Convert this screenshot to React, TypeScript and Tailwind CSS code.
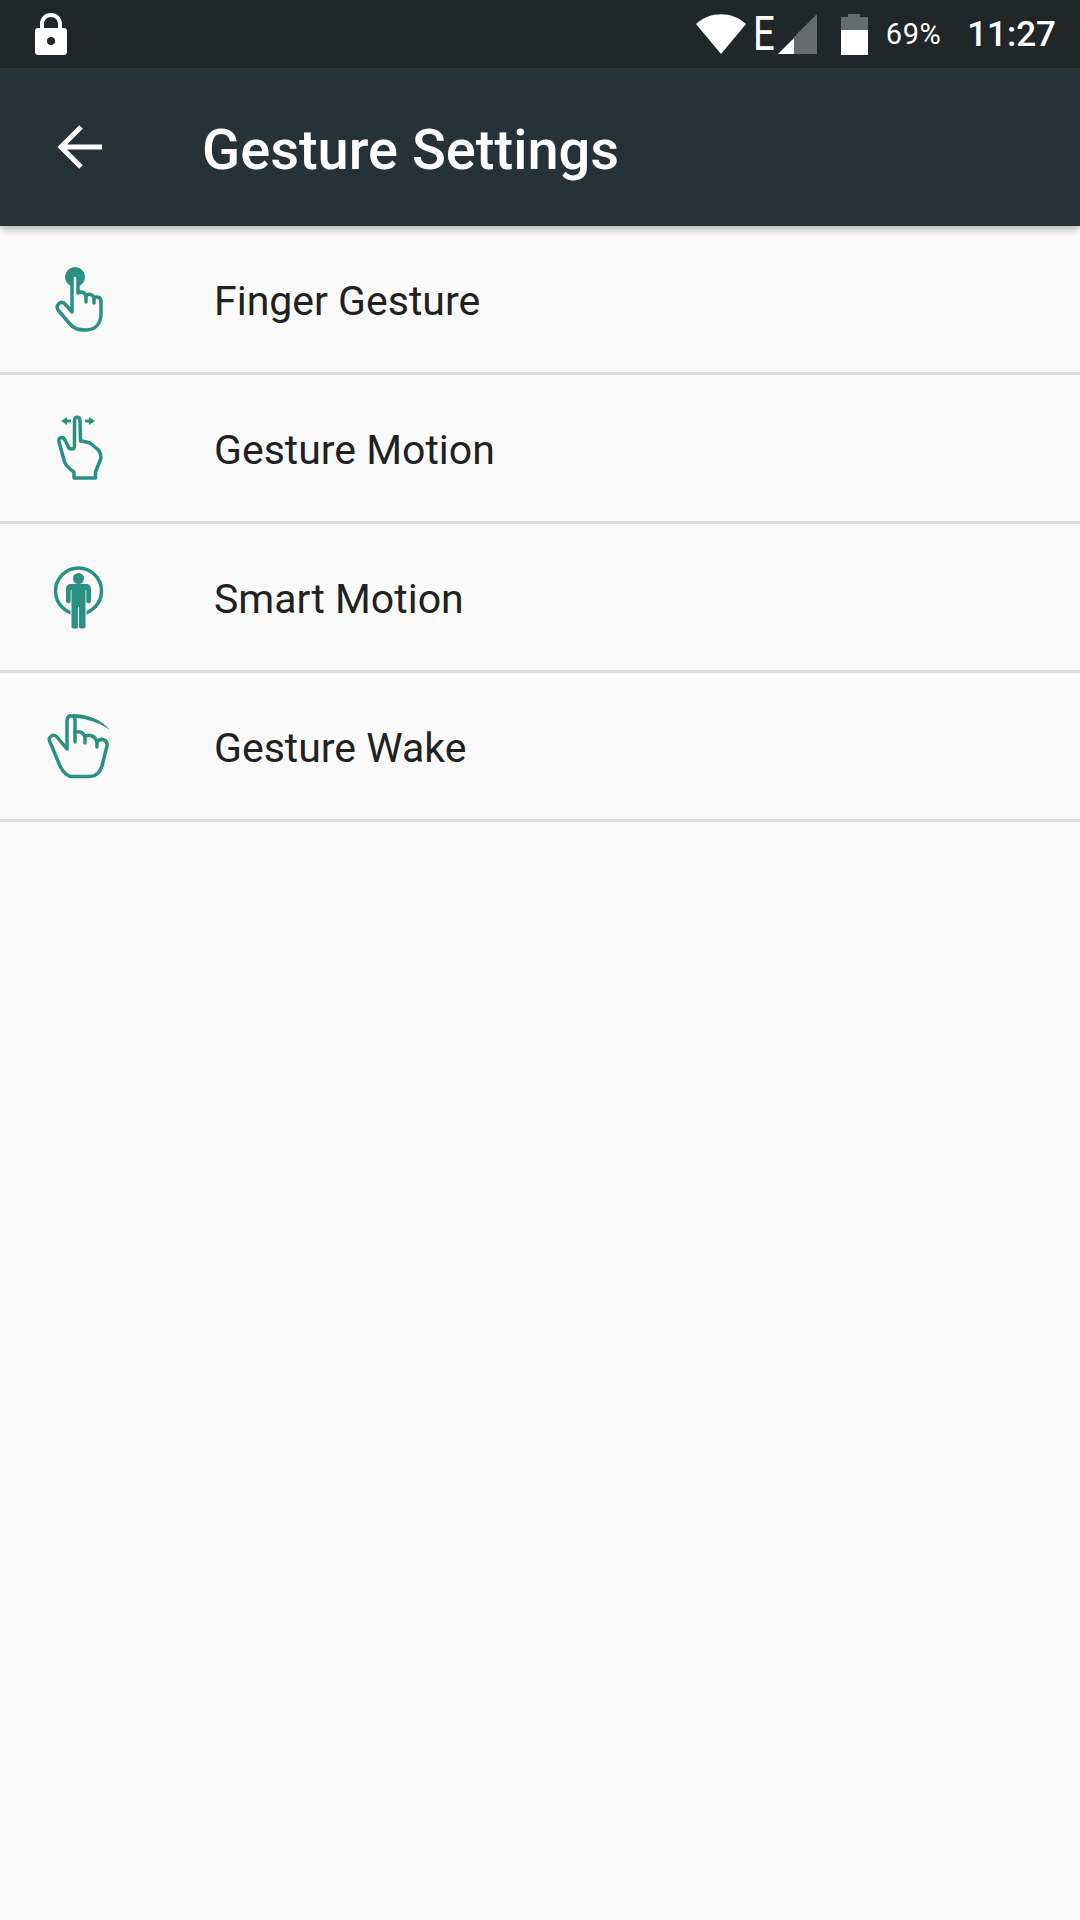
const font = { fontFamily: "Roboto, sans-serif" };

function LockIcon() {
  return (
    <svg width="32" height="42" viewBox="0 0 32 42" className="block">
      <path
        fillRule="evenodd"
        fill="#fff"
        d="M16 0C9.500 0 5 4.800 5 11v4H3c-1.700 0-3 1.300-3 3v21c0 1.700 1.300 3 3 3h26c1.700 0 3-1.300 3-3V18c0-1.700-1.300-3-3-3h-2v-4C27 4.800 22.500 0 16 0zM9 15v-4c0-4 3-7 7-7s7 3 7 7v4H9zM16 24a4 4 0 1 1 0 8 4 4 0 0 1 0-8z"
      />
    </svg>
  );
}

function WifiIcon() {
  return (
    <svg width="50" height="40" viewBox="0 0 50 40" className="block">
      <path fill="#fff" d="M0 10C14 -3 36 -3 50 10L25 40z" />
    </svg>
  );
}

function SignalIcon() {
  return (
    <svg width="39" height="40" viewBox="0 0 39 40" className="block">
      <path fill="#666b6d" d="M39 0V40H16V23z" />
      <path fill="#fff" d="M0 40L16 24V40z" />
    </svg>
  );
}

function BatteryIcon() {
  return (
    <svg width="27" height="41" viewBox="0 0 27 41" className="block">
      <path fill="#666b6d" d="M7 0H19V3H27V16H0V3H7z" />
      <rect y="16" width="27" height="25" fill="#fff" />
    </svg>
  );
}

function BackIcon() {
  return (
    <svg width="46" height="46" viewBox="0 0 46 46" className="mt-[2px] block">
      <path d="M45 22H5M24 2L4 22l20 20" fill="none" stroke="#fff" strokeWidth="5" />
    </svg>
  );
}

const teal = "#2a9082";

function FingerIcon() {
  return (
    <svg width="100" height="100" viewBox="0 -2 100 100" className="block">
      <circle cx="45" cy="26" r="10" fill={teal} />
      <g fill="none" stroke={teal} strokeWidth="3.500" strokeLinecap="round" strokeLinejoin="round">
        <path
          d="M42 26V61L35 53C31 49 25 54 28 59L39 72C44 78 48 79 56 79C66 79 71 72 71 62V50C71 46 66 45 64 47C63 43 58 42 56 45C55 41 50 40 48 42V26"
          fill="#fafafa"
        />
        <path d="M56 45V51M64 47V52" />
      </g>
      <path d="M44.800 26V38" stroke="#fafafa" strokeWidth="1.500" />
    </svg>
  );
}

function MotionIcon() {
  return (
    <svg width="100" height="100" viewBox="0 -2 100 100" className="block">
      <g fill={teal}>
        <path d="M31 21L37 17V19.500H41V22.500H37V25z" />
        <path d="M65 21L59 17V19.500H55V22.500H59V25z" />
      </g>
      <path
        d="M44 72V78H65.500V72L71 58C71 53 69 50 66 48L60 43L52 41H50.500L50 21C50 16 44.500 16 44.500 21V46C44.500 50 39 50 38 46L35 40C33 36 28 37 29 42L34 60C35 65 38 68 44 72z"
        fill="none"
        stroke={teal}
        strokeWidth="3.500"
        strokeLinejoin="round"
      />
    </svg>
  );
}

function PersonIcon() {
  return (
    <svg width="100" height="100" viewBox="0 -3 100 100" className="block">
      <circle cx="48.500" cy="41" r="23" fill="none" stroke={teal} strokeWidth="3.500" />
      <path
        d="M36 39C36 36 38 34 41 34H56C59 34 61 36 61 39V51C61 54 56.300 54 56.300 51V40H55.500V77C55.500 79 49 79 49 77V57H48V77C48 79 41.500 79 41.500 77V40H40.700V51C40.700 54 36 54 36 51z"
        fill={teal}
        stroke="#fafafa"
        strokeWidth="2"
        paintOrder="stroke"
      />
      <circle cx="48.500" cy="28.500" r="5.500" fill={teal} />
    </svg>
  );
}

function WakeIcon() {
  return (
    <svg width="100" height="100" viewBox="0 -4 100 100" className="block">
      <path d="M42 14C58 14 72 20 80 30C70 23 58 19 46 18z" fill={teal} />
      <g fill="none" stroke={teal} strokeWidth="3.500" strokeLinecap="round" strokeLinejoin="round">
        <path d="M45 33V20C45 15 38 14 37 20V49L27 37C24 33 17 37 20 42L30 66C33 72 37 76.500 42 76.500H60C66 76.500 70 72 72 66L77 46C78 40 71 37 67 42C65 35 58 34 55 37C53 31 47 31 45 33z" />
        <path d="M45 33V42M55 37V43M67 42V47" />
      </g>
    </svg>
  );
}

const rows = [
  { label: "Finger Gesture", icon: <FingerIcon /> },
  { label: "Gesture Motion", icon: <MotionIcon /> },
  { label: "Smart Motion", icon: <PersonIcon /> },
  { label: "Gesture Wake", icon: <WakeIcon /> },
];

export default function App() {
  return (
    <div style={font} className="flex h-[1920px] w-[1080px] flex-col overflow-hidden bg-[#fafafa]">
      {/* Status bar */}
      <div className="flex h-[68px] items-center bg-[#212729] pl-[35px] pr-[24px] text-white">
        <LockIcon />
        <div className="ml-auto flex items-center">
          <WifiIcon />
          <span className="ml-[7px] w-[22px] origin-left scale-x-[0.8] text-[48px] leading-none font-normal">E</span>
          <span className="ml-[3px]">
            <SignalIcon />
          </span>
          <span className="ml-[24px]">
            <BatteryIcon />
          </span>
          <span className="ml-[18px] text-[29px] leading-none tracking-[0.5px]">69%</span>
          <span className="ml-[26px] text-[35px] leading-none font-medium">11:27</span>
        </div>
      </div>

      {/* Toolbar */}
      <div className="z-10 flex h-[158px] items-center bg-[#263238] pl-[57px] shadow-[0_3px_8px_rgba(0,0,0,0.3)]">
        <BackIcon />
        <h1 className="ml-[99px] mt-[6px] text-[56px] leading-none font-medium text-white">Gesture Settings</h1>
      </div>

      {/* List */}
      <div className="flex flex-col">
        {rows.map((row) => (
          <div
            key={row.label}
            className="flex h-[149px] items-center border-b-[3px] border-[#dcdcdc] pl-[30px]"
          >
            {row.icon}
            <span className="ml-[84px] mt-[5px] text-[41px] leading-none text-[#212121]">{row.label}</span>
          </div>
        ))}
      </div>
    </div>
  );
}
